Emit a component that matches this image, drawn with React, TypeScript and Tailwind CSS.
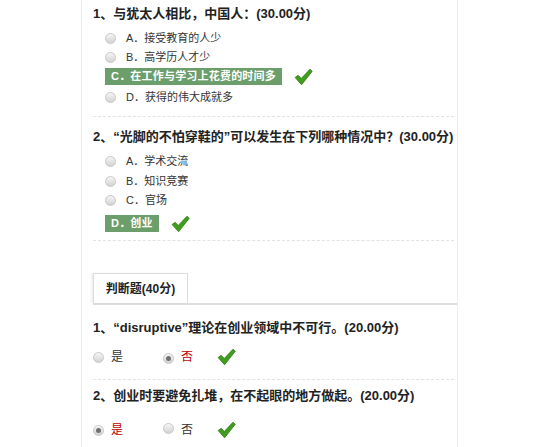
import React from "react"

const FONT = { fontFamily: '"Liberation Sans", Arial, "Noto Sans CJK SC", sans-serif' }

function Radio({ checked }: { checked?: boolean }) {
  return (
    <span className="inline-flex h-[11px] w-[11px] flex-shrink-0 items-center justify-center rounded-full border border-[#c8c8c8] bg-gradient-to-b from-[#f6f6f6] to-[#d2d2d2]">
      {checked && <span className="h-[5px] w-[5px] rounded-full bg-[#707070]" />}
    </span>
  )
}

function Check() {
  return (
    <svg width="19" height="18" viewBox="0 0 20 18" className="flex-shrink-0">
      <path
        d="M1.2 9.6 L4.4 7.2 L7.6 10.6 L16.8 0.8 L19.2 3 L8 17.2 Z"
        fill="#3f9e1c"
        stroke="#2b7413"
        strokeWidth="0.8"
        strokeLinejoin="round"
      />
    </svg>
  )
}

function Option({ label, text }: { label: string; text: string }) {
  return (
    <div className="flex h-[19px] items-center pl-[12px]">
      <Radio />
      <span className="ml-[10px] text-[11px] text-[#333]">
        {label}．{text}
      </span>
    </div>
  )
}

function Answer({ label, text }: { label: string; text: string }) {
  return (
    <div className="flex h-[19px] items-center pl-[12px]">
      <span className="flex h-[17px] items-center bg-[#6c9e6c] px-[6px] text-[11px] font-bold tracking-[0.2px] text-white">
        {label}．{text}
      </span>
      <span className="ml-[12px]">
        <Check />
      </span>
    </div>
  )
}

function Title({ children }: { children: React.ReactNode }) {
  return <div className="h-[20px] text-[13px] font-bold leading-[20px] text-[#222]">{children}</div>
}

function Sep({ className }: { className: string }) {
  return <div className={`mr-[3px] border-t border-dashed border-[#e2e2e2] ${className}`} />
}

function Judge({ yes }: { yes: boolean }) {
  return (
    <div className="flex h-[20px] items-center text-[12px]">
      <Radio checked={yes} />
      <span className={`ml-[7px] ${yes ? "text-[#c00000]" : "text-[#333]"}`}>是</span>
      <span className="ml-[40px]">
        <Radio checked={!yes} />
      </span>
      <span className={`ml-[7px] ${!yes ? "text-[#c00000]" : "text-[#333]"}`}>否</span>
      <span className="ml-[24px]">
        <Check />
      </span>
    </div>
  )
}

export default function App() {
  return (
    <div className="min-h-screen w-full bg-white" style={FONT}>
      <div className="ml-[81px] h-[447px] w-[377px] border-l border-r border-[#ececec]">
        <div className="pl-[11px] pt-[4px]">
          <Title>1、与犹太人相比，中国人：(30.00分)</Title>
          <div className="mt-[5px]">
            <Option label="A" text="接受教育的人少" />
            <Option label="B" text="高学历人才少" />
            <Answer label="C" text="在工作与学习上花费的时间多" />
            <div className="mt-[1px] flex h-[20px] items-center pl-[12px]">
              <Radio />
              <span className="ml-[10px] text-[11px] text-[#333]">D．获得的伟大成就多</span>
            </div>
          </div>
          <Sep className="mt-[9px]" />
          <div className="mt-[10px]">
            <Title>2、“光脚的不怕穿鞋的”可以发生在下列哪种情况中？(30.00分)</Title>
          </div>
          <div className="mt-[5px]">
            <Option label="A" text="学术交流" />
            <div className="h-[1px]" />
            <Option label="B" text="知识竞赛" />
            <Option label="C" text="官场" />
            <div className="h-[4px]" />
            <Answer label="D" text="创业" />
          </div>
          <Sep className="mt-[7px]" />
        </div>

        <div className="mt-[32px] flex items-end pl-[11px]">
          <div className="flex h-[30px] w-[95px] items-center justify-center border border-b-0 border-[#dcdcdc] bg-white text-[12px] font-bold text-[#222] shadow-[-2px_0_2px_rgba(0,0,0,0.06)]">
            判断题(40分)
          </div>
          <div className="flex-1" />
        </div>
        <div className="ml-[11px] h-[2px] bg-[#dedede]" />

        <div className="pl-[11px]">
          <div className="mt-[13px]">
            <Title>1、“disruptive”理论在创业领域中不可行。(20.00分)</Title>
          </div>
          <div className="mt-[9px]">
            <Judge yes={false} />
          </div>
          <Sep className="mt-[12px]" />
          <div className="mt-[6px]">
            <Title>2、创业时要避免扎堆，在不起眼的地方做起。(20.00分)</Title>
          </div>
          <div className="mt-[14px]">
            <Judge yes={true} />
          </div>
        </div>
      </div>
    </div>
  )
}
